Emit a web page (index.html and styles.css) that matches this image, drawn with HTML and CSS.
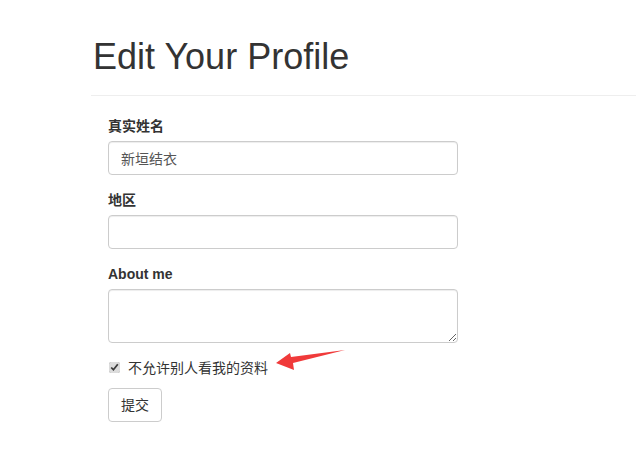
FILE: index.html
```html
<!DOCTYPE html>
<html lang="zh-CN">
<head>
<meta charset="utf-8">
<title>Edit Your Profile</title>
<link rel="stylesheet" href="styles.css">
</head>
<body>
<div class="page">
  <div class="page-header">
    <h1>Edit Your Profile</h1>
  </div>
  <form class="profile-form">
    <div class="form-group">
      <label class="control-label" for="name">真实姓名</label>
      <input class="form-control" id="name" type="text" value="新垣结衣">
    </div>
    <div class="form-group">
      <label class="control-label" for="region">地区</label>
      <input class="form-control" id="region" type="text">
    </div>
    <div class="form-group">
      <label class="control-label" for="about">About me</label>
      <textarea class="form-control textarea" id="about"></textarea>
    </div>
    <div class="checkbox">
      <label><input type="checkbox" checked> 不允许别人看我的资料</label>
    </div>
    <button class="btn" type="submit">提交</button>
  </form>
  <svg class="arrow" width="80" height="30" viewBox="0 0 80 30" aria-hidden="true">
    <polygon points="6,18 20,8 21,12 75,5 23,18 24,25" fill="#f03a3a"/>
  </svg>
</div>
</body>
</html>
```
FILE: styles.css
```css
* { box-sizing: border-box; }
html, body { margin: 0; padding: 0; background: #fff; }
body {
  font-family: "Liberation Sans", "Noto Sans CJK SC", Arial, sans-serif;
  font-size: 14px;
  line-height: 20px;
  color: #333;
}
.page {
  position: relative;
  padding-left: 91px;
  width: 636px;
  overflow: hidden;
}
.page-header {
  border-bottom: 1px solid #eee;
  padding-bottom: 18px;
  margin-right: -400px;
}
.page-header h1 {
  margin: 0;
  padding-top: 37px;
  padding-left: 2px;
  font-size: 36px;
  line-height: 40px;
  font-weight: 500;
  color: #333;
}
.profile-form {
  margin-left: 17px;
  margin-top: 20px;
  width: 350px;
}
.form-group { margin-bottom: 15px; }
.control-label {
  display: block;
  font-weight: bold;
  margin-bottom: 5px;
}
.form-control {
  display: block;
  width: 100%;
  height: 34px;
  padding: 6px 12px;
  font-family: "Liberation Sans", "Noto Sans CJK SC", Arial, sans-serif;
  font-size: 14px;
  line-height: 20px;
  color: #555;
  background: #fff;
  border: 1px solid #ccc;
  border-radius: 4px;
  box-shadow: inset 0 1px 1px rgba(0,0,0,.075);
  margin: 0;
}
.textarea { height: 54px; resize: vertical; }
.checkbox {
  margin-top: 10px;
  margin-bottom: 10px;
  position: relative;
}
.checkbox label {
  display: block;
  padding-left: 20px;
  font-weight: normal;
  min-height: 20px;
}
.checkbox input {
  position: absolute;
  left: 0;
  margin: 4px 0 0 1px;
  width: 11px;
  height: 11px;
  accent-color: #dcdcdc;
}
.btn {
  display: block;
  height: 34px;
  padding: 6px 12px;
  font-family: "Liberation Sans", "Noto Sans CJK SC", Arial, sans-serif;
  font-size: 14px;
  line-height: 20px;
  color: #333;
  background: #fff;
  border: 1px solid #ccc;
  border-radius: 4px;
  cursor: pointer;
}
.arrow {
  position: absolute;
  left: 270px;
  top: 345px;
}
```
